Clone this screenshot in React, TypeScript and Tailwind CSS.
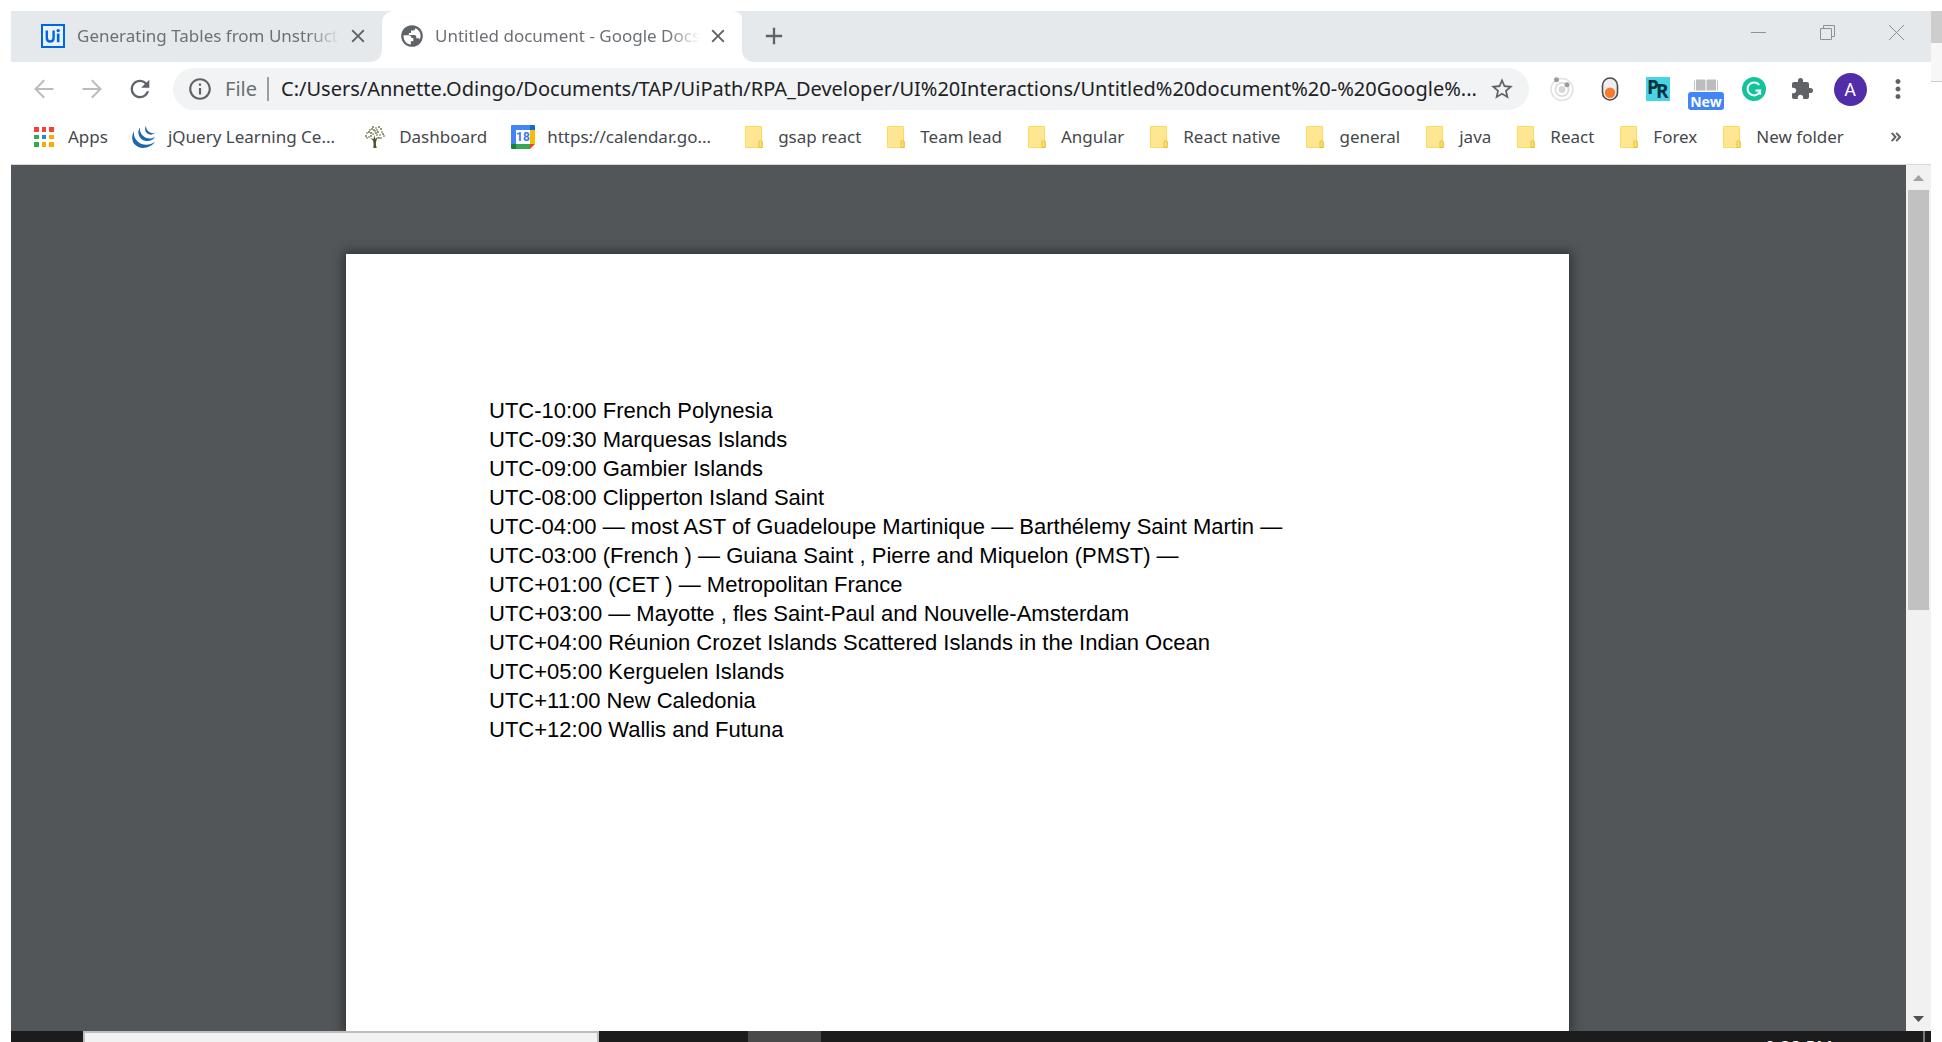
import type { ReactNode } from "react";
import { MdAdd, MdClose, MdExtension, MdInfoOutline, MdMoreVert, MdRefresh, MdStarBorder } from "react-icons/md";

const UI_FONT = "font-['Noto_Sans','Open_Sans',sans-serif]";

function UiPathIcon() {
  return (
    <svg viewBox="0 0 24 24" className="size-6 shrink-0" aria-hidden="true">
      <rect width="24" height="24" fill="#0067df" />
      <rect x="2" y="2" width="20" height="20" fill="#e9f1fa" />
      <path d="M5.8 6.5v7.2c0 2.6 1.2 3.8 3.4 3.8s3.4-1.2 3.4-3.8V6.5" fill="none" stroke="#0067df" strokeWidth="2.4" />
      <path d="M17.2 9.6v8.6" stroke="#0067df" strokeWidth="2.6" />
      <circle cx="17.2" cy="6.6" r="1.7" fill="#0067df" />
    </svg>
  );
}

function GlobeIcon() {
  return (
    <svg viewBox="0 0 22 22" className="size-[22px] shrink-0" aria-hidden="true">
      <circle cx="11" cy="11" r="10.8" fill="#5f6368" />
      <path
        d="M2.6 10.2h4.9c1.7 0 3 1.2 3 2.8h1.8v3.2h-2.4v3.4C5.600 19 2.600 15.600 2.600 11.400zM14.300 3.300c-.1 1.800-.9 2.300-2.600 2.300H10v2.300H7.900v2.200h5.300c1.500 0 2.100.8 2.100 2.100v1.100h1.700c.9 0 1.500.5 1.800 1.300 2-4.500.2-9.500-4.500-11.300z"
        fill="#fff"
      />
    </svg>
  );
}

function ArrowIcon({ flip = false }: { flip?: boolean }) {
  return (
    <svg viewBox="0 0 20 20" className={flip ? "size-5 rotate-180" : "size-5"} aria-hidden="true">
      <path d="M19.500 10H1.800M10.200 1.200 1.500 10l8.700 8.800" fill="none" stroke="#babcbe" strokeWidth="2" />
    </svg>
  );
}

function AppsIcon() {
  const colors = ["#f44336", "#f44336", "#f44336", "#34a853", "#1e88e5", "#fbab00", "#34a853", "#fbab00", "#fbab00"];
  return (
    <span className="grid size-5 shrink-0 grid-cols-3 gap-[3px]" aria-hidden="true">
      {colors.map((c, i) => (
        <span key={i} style={{ backgroundColor: c }} />
      ))}
    </span>
  );
}

function JQueryIcon() {
  return (
    <svg viewBox="0 0 24 24" className="size-6 shrink-0" fill="#1b69ac" aria-hidden="true">
      <path d="M2.300 6C-.7 10.300-.3 16 2.500 19.300 7.600 25 18 24 23 16.800c-5.300 4.100-12.900 4-17.300-.3C2.500 13.400 1.200 9.800 2.300 6z" />
      <path d="M8 2.400c-2.700 3.700-1.900 8.700 1.400 11.500 4.400 3.600 11 2.300 14.100-2.200-4 2.500-8.800 2.300-11.900-.5C8.700 8.800 7.400 5.800 8 2.400z" />
      <path d="M14 .8c-1.700 2.500-1.100 5.600 1.100 7.500 2.600 2.200 6 1.500 8.400-.7-2.500.9-4.700.8-6.700-.8C14.800 5.200 13.900 3.100 14 .8z" />
    </svg>
  );
}

const LEAVES = [
  [8, 1], [11, 2], [14, 1], [5, 4], [9, 4], [12, 4], [16, 3], [2, 7], [6, 7], [8, 8], [13, 6], [17, 6], [1, 10],
  [4, 11], [11, 7], [15, 9], [18, 8], [2, 12], [6, 10], [16, 12], [14, 12], [10, 5], [4, 6], [19, 10], [7, 3], [12, 9],
];

function TreeIcon() {
  return (
    <svg viewBox="0 0 20 22" className="h-[22px] w-5 shrink-0" aria-hidden="true">
      {LEAVES.map(([x, y], i) => (
        <circle key={i} cx={x} cy={y} r=".9" fill={i % 2 ? "#8a9070" : "#626b3e"} />
      ))}
      <path d="M8.300 22c.5-4 .3-6-.6-8L5 12l3.500 1L9.300 9l1 4 3.200-2.500-2 3.500c-.8 2-.8 5 .2 8z" fill="#55502f" />
    </svg>
  );
}

function CalendarIcon() {
  return (
    <svg viewBox="0 0 24 24" className="size-6 shrink-0" aria-hidden="true">
      <path d="M1 0h18v5H5v14H0V1a1 1 0 0 1 1-1z" fill="#4285f4" />
      <path d="M19 0h4a1 1 0 0 1 1 1v4h-5z" fill="#1967d2" />
      <path d="M19 5h5v14h-5z" fill="#fbbc04" />
      <path d="M5 19h14v5H5z" fill="#34a853" />
      <path d="M0 19h5v5H1a1 1 0 0 1-1-1z" fill="#188038" />
      <path d="M19 19h5l-5 5z" fill="#ea4335" />
      <path d="M5 5h14v14H5z" fill="#fff" />
      <text x="12" y="16" textAnchor="middle" fontFamily="Roboto, sans-serif" fontWeight="700" fontSize="12" fill="#3b78e7">
        18
      </text>
    </svg>
  );
}

function FolderIcon() {
  return (
    <svg viewBox="0 0 18 22" className="h-[22px] w-[18px] shrink-0" aria-hidden="true">
      <path d="M.5.500h16v14l1 1v6H.5z" fill="#ffe693" stroke="#ffd95e" />
      <path d="M14 21.500v-5.500a1.500 1.500 0 0 1 3 0v5.500z" fill="#ffe07a" stroke="#e8bf3c" />
    </svg>
  );
}

function OrbitIcon() {
  return (
    <svg viewBox="0 0 24 24" className="size-6" aria-hidden="true">
      <circle cx="12" cy="12.500" r="11" fill="none" stroke="#e2e2e2" strokeWidth="1.500" />
      <circle cx="12" cy="12.500" r="6.600" fill="none" stroke="#dcdcdc" strokeWidth="1.800" />
      <circle cx="12" cy="12.500" r="3.500" fill="#d8d8d8" />
      <circle cx="6.500" cy="2.800" r="2.500" fill="#9b9b9b" />
      <circle cx="17" cy="7.800" r="2.500" fill="#9b9b9b" />
    </svg>
  );
}

function ToggleIcon() {
  return (
    <svg viewBox="0 0 18 24" className="h-6 w-[18px]" aria-hidden="true">
      <rect x="1.500" y="1" width="15" height="22" rx="7.500" fill="#eee" stroke="#4c4c4c" strokeWidth="1.600" />
      <circle cx="9" cy="15.700" r="5.200" fill="#f57c2d" />
    </svg>
  );
}

function PageRulerIcon() {
  return (
    <svg viewBox="0 0 24 24" className="size-6" aria-hidden="true">
      <rect width="24" height="24" fill="#48d3e6" />
      <g fontFamily="Open Sans, sans-serif" fontWeight="700" fontSize="19" fill="#06343c">
        <text x="1" y="17">P</text>
        <text x="10" y="21">R</text>
      </g>
    </svg>
  );
}

function ReaderIcon() {
  return (
    <span className="relative block h-6 w-9" aria-hidden="true">
      <svg viewBox="0 0 24 12" className="mx-auto mt-0.5 h-3 w-6">
        <path d="M.5 1.500v10M23.500 1.500v10" stroke="#c4c4c4" />
        <path d="M2 .5h8.500l1 .8v10.200H2zM22 .5h-8.500l-1 .8v10.200H22z" fill="#bdbdbd" />
      </svg>
      <span className="absolute left-0 top-[15px] flex h-[18px] w-9 items-center justify-center rounded-[3px] bg-[#4285f4] font-['Open_Sans',sans-serif] text-[14px] font-bold text-white">
        New
      </span>
    </span>
  );
}

function GrammarIcon() {
  return (
    <svg viewBox="0 0 24 24" className="size-6" aria-hidden="true">
      <circle cx="12" cy="12" r="12" fill="#15c39a" />
      <path d="M17.200 7.900A6.500 6.500 0 1 0 17 16.200l.8-2.700h-4.300" fill="none" stroke="#fff" strokeWidth="2" />
      <path d="M18.300 12.700v5" stroke="#fff" strokeWidth="1.800" />
    </svg>
  );
}

function ToolButton({ label, children }: { label: string; children: ReactNode }) {
  return (
    <button type="button" aria-label={label} className="flex h-10 w-12 shrink-0 items-center justify-center">
      {children}
    </button>
  );
}

function TabLabel({ children }: { children: ReactNode }) {
  return (
    <span className="min-w-0 flex-1 overflow-hidden whitespace-nowrap text-[17px] text-[#6c7074] [mask-image:linear-gradient(to_right,#000_calc(100%-32px),transparent)]">
      {children}
    </span>
  );
}

function TabStrip() {
  return (
    <div className="flex h-[51px] bg-white">
      <div className="flex w-[371px] shrink items-center rounded-br-xl bg-[#e6e9ec] pl-[30px] pr-3 pb-0.5">
        <UiPathIcon />
        <span className="w-3 shrink-0" />
        <TabLabel>Generating Tables from Unstructu</TabLabel>
        <button type="button" aria-label="Close tab" className="ml-1.5 flex size-6 items-center justify-center">
          <MdClose className="size-[22px] text-[#5f6368]" />
        </button>
      </div>
      <div className="flex w-[360px] shrink bg-[#e6e9ec]">
        <div className="flex flex-1 items-center rounded-t-xl bg-white pl-[19px] pr-3.5 pb-0.5">
          <GlobeIcon />
          <span className="w-3 shrink-0" />
          <TabLabel>Untitled document - Google Docs</TabLabel>
          <button type="button" aria-label="Close tab" className="ml-1.5 flex size-6 items-center justify-center">
            <MdClose className="size-[22px] text-[#5f6368]" />
          </button>
        </div>
      </div>
      <div className="flex flex-1 items-center rounded-bl-xl bg-[#e6e9ec] pl-5">
        <button type="button" aria-label="New tab" className="flex size-6 items-center justify-center pb-0.5">
          <MdAdd className="size-7 shrink-0 text-[#5f6368]" />
        </button>
        <div className="ml-auto flex self-start">
          <button type="button" aria-label="Minimize" className="flex h-[42px] w-[69px] items-center justify-center">
            <span className="h-px w-[15px] bg-[#8e9092]" />
          </button>
          <button type="button" aria-label="Restore" className="flex h-[42px] w-[69px] items-center justify-center">
            <svg viewBox="0 0 15 15" className="size-[15px]" fill="none" stroke="#8e9092">
              <path d="M.5 3.500h11v11H.5zM3.500 3V.5h11v11H12" />
            </svg>
          </button>
          <button type="button" aria-label="Close" className="flex h-[42px] w-[69px] items-center justify-center">
            <svg viewBox="0 0 15 15" className="size-[15px]" stroke="#8e9092">
              <path d="M0 0l15 15M15 0 0 15" />
            </svg>
          </button>
        </div>
      </div>
    </div>
  );
}

function Toolbar() {
  return (
    <div className="flex h-[54px] items-center px-[9px]">
      <ToolButton label="Back">
        <ArrowIcon />
      </ToolButton>
      <ToolButton label="Forward">
        <ArrowIcon flip />
      </ToolButton>
      <ToolButton label="Reload">
        <MdRefresh className="size-7 text-[#5f6368]" />
      </ToolButton>
      <div className="mx-[9px] flex h-[42px] min-w-0 flex-1 items-center rounded-full bg-[#f1f3f4] px-3.5 text-[20px]">
        <MdInfoOutline className="size-[26px] shrink-0 text-[#5f6368]" />
        <label htmlFor="address" className="ml-3 w-10 text-[#6b6f73]">
          File
        </label>
        <span className="ml-0.5 h-6 w-0.5 bg-[#9b9ea1]" />
        <input
          id="address"
          readOnly
          value="C:/Users/Annette.Odingo/Documents/TAP/UiPath/RPA_Developer/UI%20Interactions/Untitled%20document%20-%20Google%..."
          className="ml-3 min-w-0 flex-1 bg-transparent text-[#202124] outline-none"
        />
        <button type="button" aria-label="Bookmark this page" className="shrink-0">
          <MdStarBorder className="size-[26px] text-[#5f6368]" />
        </button>
      </div>
      <ToolButton label="Orbit extension">
        <OrbitIcon />
      </ToolButton>
      <ToolButton label="Toggle extension">
        <ToggleIcon />
      </ToolButton>
      <ToolButton label="Page ruler">
        <PageRulerIcon />
      </ToolButton>
      <ToolButton label="Reader">
        <ReaderIcon />
      </ToolButton>
      <ToolButton label="Grammar">
        <GrammarIcon />
      </ToolButton>
      <ToolButton label="Extensions">
        <MdExtension className="size-6 text-[#5f6368]" />
      </ToolButton>
      <ToolButton label="Profile">
        <span className="flex size-[33px] items-center justify-center rounded-full bg-[#512da8] font-['Roboto',sans-serif] text-[18px] text-white">A</span>
      </ToolButton>
      <ToolButton label="Menu">
        <MdMoreVert className="size-[30px] text-[#5f6368]" />
      </ToolButton>
    </div>
  );
}

const FOLDERS = ["gsap react", "Team lead", "Angular", "React native", "general", "java", "React", "Forex", "New folder"];

function Bookmark({ icon, children }: { icon: ReactNode; children: ReactNode }) {
  return (
    <a href="#" className="flex shrink-0 items-center whitespace-nowrap">
      {icon}
      {children}
    </a>
  );
}

function BookmarksBar() {
  return (
    <nav aria-label="Bookmarks" className="flex h-[49px] items-center border-b border-[#d5d8dc] pb-1.5 pl-[23px] pr-[30px] text-[17px] text-[#45484c]">
      <div className="flex min-w-0 flex-1 items-center gap-[26px] overflow-hidden">
        <div className="flex items-center gap-6">
          <Bookmark icon={<AppsIcon />}>
            <span className="pl-3.5">Apps</span>
          </Bookmark>
          <Bookmark icon={<JQueryIcon />}>
            <span className="pl-3">jQuery Learning Ce...</span>
          </Bookmark>
        </div>
        <div className="ml-1 flex items-center gap-6">
          <Bookmark icon={<TreeIcon />}>
            <span className="pl-3.5">Dashboard</span>
          </Bookmark>
          <Bookmark icon={<CalendarIcon />}>
            <span className="pl-3">https://calendar.go...</span>
          </Bookmark>
        </div>
        <div className="ml-2 flex items-center gap-[26px]">
          {FOLDERS.map((name) => (
            <Bookmark key={name} icon={<FolderIcon />}>
              <span className="pl-[15px]">{name}</span>
            </Bookmark>
          ))}
        </div>
      </div>
      <button type="button" aria-label="More bookmarks" className="shrink-0">
        <svg viewBox="0 0 10 10" className="size-2.5" fill="none" stroke="#5f6368" strokeWidth="2">
          <path d="M.7.800 4.500 5 .7 9.200M5.200.800 9 5 5.200 9.200" />
        </svg>
      </button>
    </nav>
  );
}

const LINES = [
  "UTC-10:00 French Polynesia",
  "UTC-09:30 Marquesas Islands",
  "UTC-09:00 Gambier Islands",
  "UTC-08:00 Clipperton Island Saint",
  "UTC-04:00 — most AST of Guadeloupe Martinique — Barthélemy Saint Martin —",
  "UTC-03:00 (French ) — Guiana Saint , Pierre and Miquelon (PMST) —",
  "UTC+01:00 (CET ) — Metropolitan France",
  "UTC+03:00 — Mayotte , fles Saint-Paul and Nouvelle-Amsterdam",
  "UTC+04:00 Réunion Crozet Islands Scattered Islands in the Indian Ocean",
  "UTC+05:00 Kerguelen Islands",
  "UTC+11:00 New Caledonia",
  "UTC+12:00 Wallis and Futuna",
];

function Viewer() {
  return (
    <main className="flex min-h-0 flex-1 bg-[#525659]">
      <div className="flex min-w-0 flex-1 justify-center overflow-hidden pr-0.5 pt-[89px]">
        <article className="w-full max-w-[1223px] bg-white px-[143px] pt-[142px] font-['Liberation_Sans',Arial,sans-serif] text-[22px] leading-[29px] text-black shadow-[0_0_10px_3px_rgba(0,0,0,0.4)]">
          {LINES.map((line) => (
            <p key={line}>{line}</p>
          ))}
        </article>
      </div>
      <div className="flex w-[25px] shrink-0 flex-col items-center bg-[#f1f1f1]">
        <button type="button" aria-label="Scroll up" className="flex h-[25px] w-full shrink-0 items-center justify-center">
          <svg viewBox="0 0 11 6" className="h-1.5 w-[11px]" fill="#a3a3a3">
            <path d="M0 6 5.500 0 11 6z" />
          </svg>
        </button>
        <div className="min-h-0 w-full flex-1">
          <div className="mx-auto h-[51.500%] w-[21px] bg-[#c1c1c1]" />
        </div>
        <button type="button" aria-label="Scroll down" className="flex h-[25px] w-full shrink-0 items-center justify-center">
          <svg viewBox="0 0 11 6" className="h-1.5 w-[11px]" fill="#505050">
            <path d="M0 0 5.500 6 11 0z" />
          </svg>
        </button>
      </div>
    </main>
  );
}

function Taskbar() {
  return (
    <footer className="flex h-[11px] shrink-0 overflow-hidden bg-[#1c1c1c]">
      <div className="ml-[72px] w-[516px] border-2 border-b-0 border-[#bdbdbd] bg-[#f2f2f2]" />
      <div className="ml-[149px] w-[73px] bg-[#4a4a4a]" />
      <span className="ml-auto h-8 w-[158px] pt-1 text-[18px] leading-6 text-white">9:38 PM</span>
      <div className="mr-1.5 w-0.5 bg-[#777]" />
    </footer>
  );
}

export default function App() {
  return (
    <div className={`flex h-screen overflow-hidden bg-white pl-[11px] pt-[11px] ${UI_FONT}`}>
      <div className="flex min-w-0 flex-1 flex-col">
        <TabStrip />
        <Toolbar />
        <BookmarksBar />
        <Viewer />
        <Taskbar />
      </div>
      <div className="w-[11px] shrink-0">
        <div className="h-8 bg-[#cdcdcd]" />
        <div className="h-[39px] border-b border-[#ccc] bg-[#f7f7f7]" />
      </div>
    </div>
  );
}
